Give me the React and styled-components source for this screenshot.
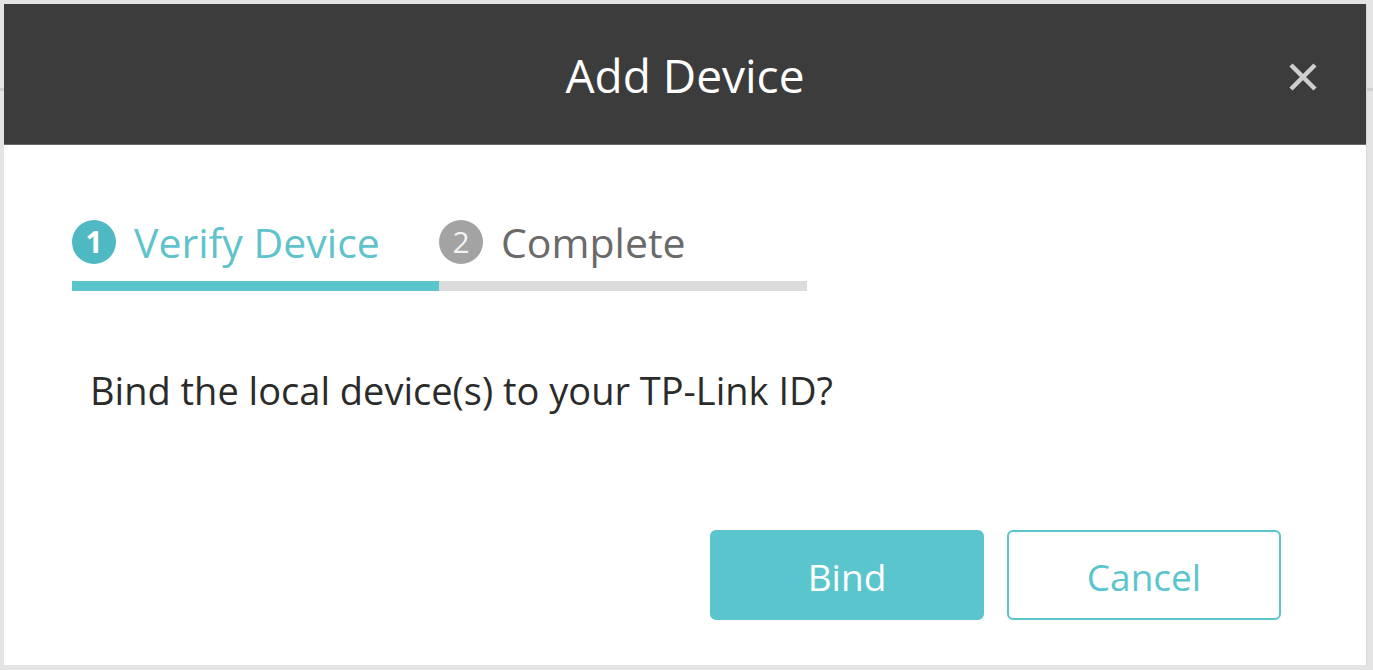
import React from 'react'
import styled, { createGlobalStyle } from 'styled-components'

const GlobalStyle = createGlobalStyle`
  html, body {
    margin: 0;
    padding: 0;
  }
  body {
    width: 1373px;
    height: 670px;
    overflow: hidden;
    font-family: "Open Sans", "Noto Sans", Arial, sans-serif;
    background: linear-gradient(to bottom, #e4e4e4 0, #e4e4e4 88px, #cfcfcf 88px, #cfcfcf 91px, #e4e4e4 91px);
  }
`

const Page = styled.div`
  padding: 4px 6px 5px 4px;
  box-sizing: border-box;
  height: 670px;
`

const Dialog = styled.div`
  width: 1363px;
  height: 661px;
  background: #ffffff;
  display: flex;
  flex-direction: column;
  box-sizing: border-box;
  border-right: 1px solid #d6d6d6;
`

const Header = styled.div`
  height: 141px;
  background: #3c3c3c;
  display: flex;
  align-items: center;
  justify-content: center;
  position: relative;
  flex-shrink: 0;
  border-bottom: 1px solid #6a6a6a;
  box-sizing: border-box;
`

const Title = styled.h1`
  margin: 0;
  font-size: 46px;
  font-weight: 400;
  color: #ffffff;
  letter-spacing: 0;
  padding-top: 2px;
`

const Close = styled.button`
  position: absolute;
  right: 45px;
  top: 55px;
  width: 36px;
  height: 36px;
  padding: 0;
  border: none;
  background: transparent;
  display: flex;
  align-items: center;
  justify-content: center;
  cursor: pointer;
`

const Body = styled.div`
  flex: 1;
  display: flex;
  flex-direction: column;
  padding: 75px 85px 0 68px;
`

const Steps = styled.div`
  display: flex;
`

const Step = styled.div`
  width: ${p => p.$w}px;
  display: flex;
  flex-direction: column;
`

const StepLabel = styled.div`
  display: flex;
  align-items: center;
  gap: 18px;
  height: 44px;
`

const StepNum = styled.span`
  width: 44px;
  height: 44px;
  border-radius: 50%;
  background: ${p => (p.$active ? '#4fb9c3' : '#a3a3a3')};
  color: ${p => (p.$active ? '#ffffff' : '#f2f2f2')};
  font-size: 30px;
  font-weight: ${p => (p.$active ? 700 : 400)};
  display: flex;
  align-items: center;
  justify-content: center;
  flex-shrink: 0;
  line-height: 1;
`

const StepText = styled.span`
  font-size: 41px;
  color: ${p => (p.$active ? '#5ec3cc' : '#6a6a6a')};
  line-height: 1;
  white-space: nowrap;
`

const Bar = styled.div`
  height: 10px;
  margin-top: 17px;
  background: ${p => (p.$active ? '#5bc5cd' : '#dcdcdc')};
`

const Message = styled.p`
  margin: 77px 0 0 18px;
  font-size: 38px;
  color: #2b2b2b;
  line-height: 1.2;
`

const Actions = styled.div`
  display: flex;
  justify-content: flex-end;
  gap: 23px;
  margin-top: 116px;
`

const Button = styled.button`
  width: 274px;
  height: 90px;
  box-sizing: border-box;
  padding: 4px 0 0;
  border-radius: 6px;
  font-family: inherit;
  font-size: 37px;
  cursor: pointer;
  border: 2px solid #5bc5cd;
  background: ${p => (p.$primary ? '#5bc5cd' : '#ffffff')};
  color: ${p => (p.$primary ? '#ffffff' : '#5bc5cd')};
`

export default function App() {
  return (
    <>
      <GlobalStyle />
      <Page>
        <Dialog>
          <Header>
            <Title>Add Device</Title>
            <Close aria-label="Close">
              <svg width="30" height="30" viewBox="0 0 30 30">
                <path d="M3 3 L27 27 M27 3 L3 27" stroke="#cfcfcf" strokeWidth="4.5" />
              </svg>
            </Close>
          </Header>
          <Body>
            <Steps>
              <Step $w={367}>
                <StepLabel>
                  <StepNum $active>1</StepNum>
                  <StepText $active>Verify Device</StepText>
                </StepLabel>
                <Bar $active />
              </Step>
              <Step $w={368}>
                <StepLabel>
                  <StepNum>2</StepNum>
                  <StepText>Complete</StepText>
                </StepLabel>
                <Bar />
              </Step>
            </Steps>
            <Message>Bind the local device(s) to your TP-Link ID?</Message>
            <Actions>
              <Button $primary>Bind</Button>
              <Button>Cancel</Button>
            </Actions>
          </Body>
        </Dialog>
      </Page>
    </>
  )
}
